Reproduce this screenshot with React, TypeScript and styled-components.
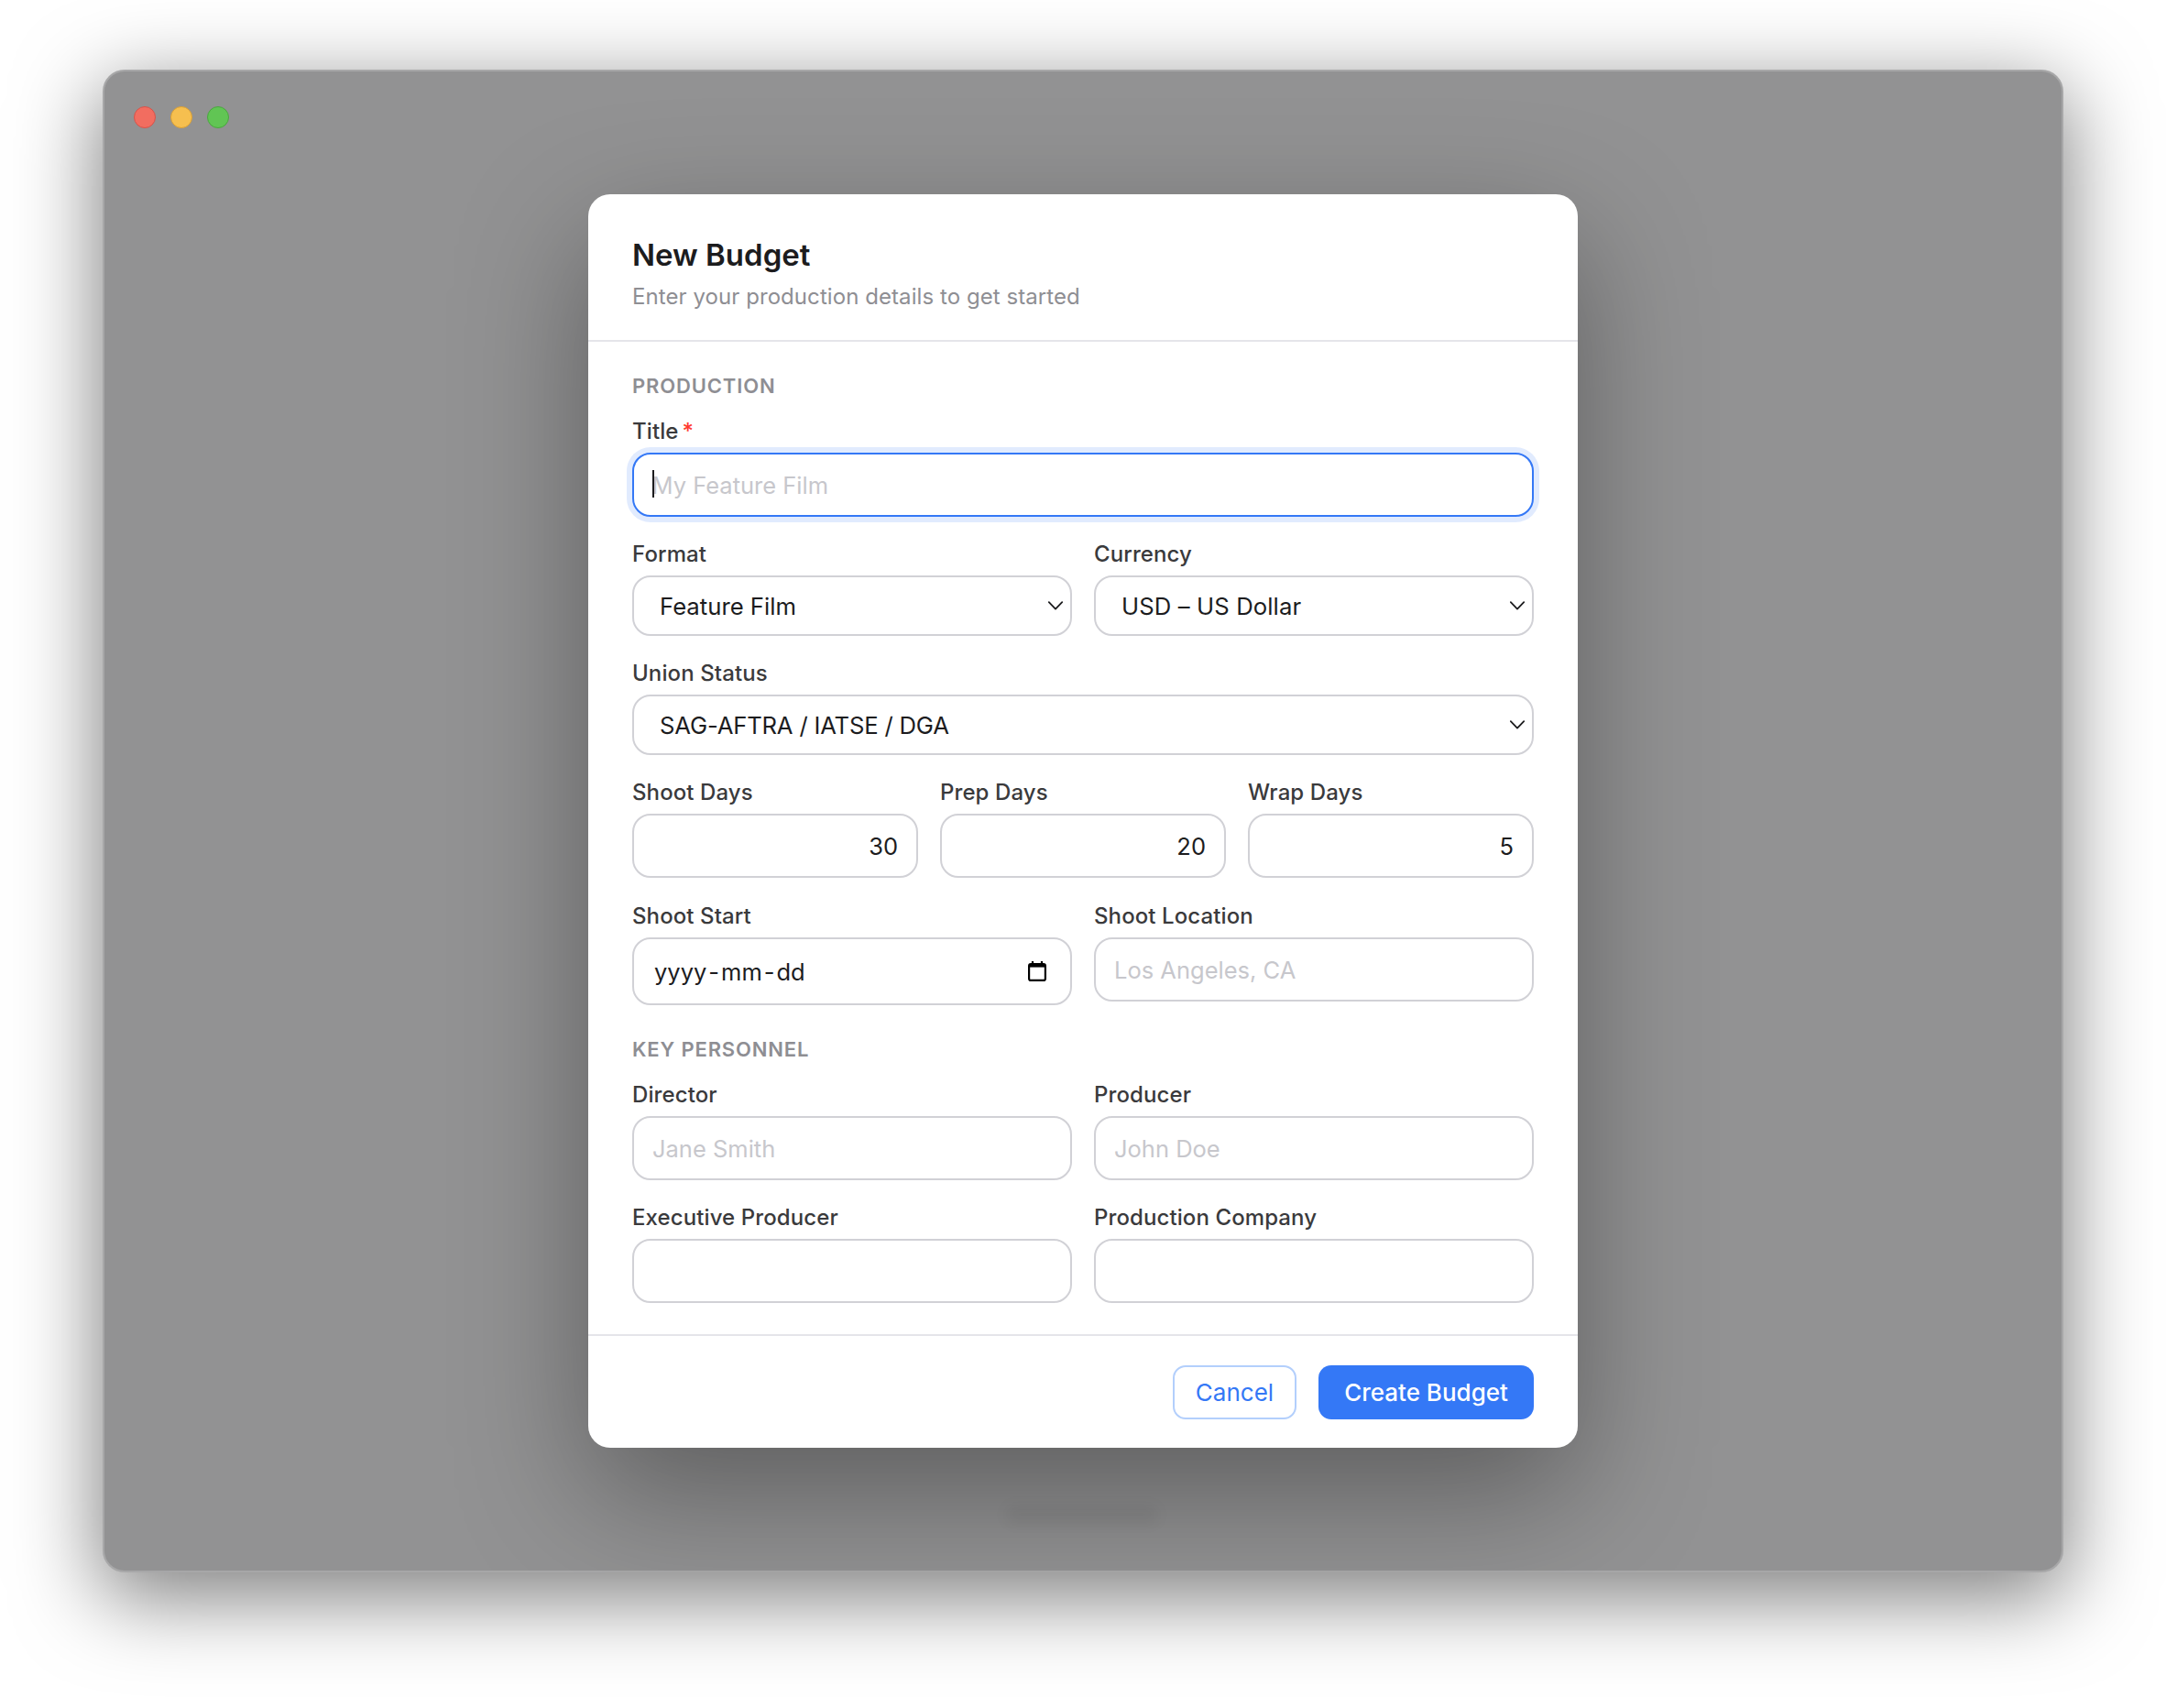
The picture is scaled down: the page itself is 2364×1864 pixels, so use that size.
import React from "react";
import styled, { createGlobalStyle } from "styled-components";

const GlobalStyle = createGlobalStyle`
  html, body {
    margin: 0;
    padding: 0;
    background: #fff;
  }
  * {
    box-sizing: border-box;
  }
`;

type Option = { label: string };

const ChevronIcon = () => (
  <Chevron viewBox="0 0 16 10" fill="none">
    <path d="M.8 1.2 8 8.6l7.2-7.4" stroke="#1c1c1e" strokeWidth="1.8" strokeLinecap="round" strokeLinejoin="round" />
  </Chevron>
);

const SelectField: React.FC<{ label: string; options: Option[]; tracking?: number }> = ({
  label,
  options,
  tracking = 0,
}) => (
  <Field>
    <Label>{label}</Label>
    <SelectWrap>
      <Select defaultValue={options[0].label} $tracking={tracking}>
        {options.map((o) => (
          <option key={o.label}>{o.label}</option>
        ))}
      </Select>
      <ChevronIcon />
    </SelectWrap>
  </Field>
);

const TextField: React.FC<{ label: string; placeholder?: string }> = ({ label, placeholder }) => (
  <Field>
    <Label>{label}</Label>
    <Input type="text" placeholder={placeholder} />
  </Field>
);

const NumberField: React.FC<{ label: string; value: number }> = ({ label, value }) => (
  <Field>
    <Label>{label}</Label>
    <NumberInput type="text" defaultValue={value} />
  </Field>
);

export default function App() {
  return (
    <>
      <GlobalStyle />
      <Page>
        <Window>
          <ModalShadow />
          <TrafficLights>
            <Light $fill="#f26d60" $edge="#d6534a" />
            <Light $fill="#f6bf4f" $edge="#d99f35" />
            <Light $fill="#61c554" $edge="#4aa63f" />
          </TrafficLights>
          <GhostText />
          <Modal>
            <Header>
              <Title>New Budget</Title>
              <Subtitle>Enter your production details to get started</Subtitle>
            </Header>
            <Body>
              <SectionLabel>Production</SectionLabel>
              <Field>
                <Label>
                  Title<Required>*</Required>
                </Label>
                <TitleInputWrap>
                  <Caret />
                  <FocusedInput type="text" placeholder="My Feature Film" />
                </TitleInputWrap>
              </Field>
              <TwoCol>
                <SelectField label="Format" options={[{ label: "Feature Film" }]} />
                <SelectField label="Currency" options={[{ label: "USD – US Dollar" }]} tracking={0.1} />
              </TwoCol>
              <SelectField label="Union Status" options={[{ label: "SAG-AFTRA / IATSE / DGA" }]} tracking={-0.2} />
              <ThreeCol>
                <NumberField label="Shoot Days" value={30} />
                <NumberField label="Prep Days" value={20} />
                <NumberField label="Wrap Days" value={5} />
              </ThreeCol>
              <TwoCol>
                <Field>
                  <Label>Shoot Start</Label>
                  <DateBox>
                    <DateText>
                      yyyy<DateDash>-</DateDash>mm<DateDash>-</DateDash>dd
                    </DateText>
                    <svg width="20" height="22" viewBox="0 0 20 22" fill="none">
                      <path d="M5 0v4M15 0v4" stroke="#000" strokeWidth="2.2" />
                      <rect x="1.1" y="3.1" width="17.8" height="17.8" rx="2" stroke="#000" strokeWidth="2.2" />
                      <path d="M1 5.3h18" stroke="#000" strokeWidth="2.6" />
                    </svg>
                  </DateBox>
                </Field>
                <TextField label="Shoot Location" placeholder="Los Angeles, CA" />
              </TwoCol>
              <SectionLabel $spaced>Key Personnel</SectionLabel>
              <TwoCol>
                <TextField label="Director" placeholder="Jane Smith" />
                <TextField label="Producer" placeholder="John Doe" />
              </TwoCol>
              <TwoCol>
                <TextField label="Executive Producer" />
                <TextField label="Production Company" />
              </TwoCol>
            </Body>
            <Footer>
              <SecondaryButton>Cancel</SecondaryButton>
              <PrimaryButton>Create Budget</PrimaryButton>
            </Footer>
          </Modal>
        </Window>
      </Page>
    </>
  );
}

const Page = styled.div`
  width: 2364px;
  height: 1864px;
  padding: 76px 112px 148px;
  background: #fff;
  overflow: hidden;
  font-family: Inter, "Liberation Sans", sans-serif;
`;

const Window = styled.div`
  position: relative;
  width: 2140px;
  height: 1640px;
  border-radius: 24px;
  background: #929293;
  box-shadow: 0 24px 90px 4px rgba(0, 0, 0, 0.5);
  display: flex;
  align-items: center;
  justify-content: center;

  &::after {
    content: "";
    position: absolute;
    inset: 0;
    border-radius: 24px;
    box-shadow: inset 0 0 0 2px rgba(255, 255, 255, 0.2);
    pointer-events: none;
  }
`;

/* the modal shadow stays inside the window, the window's own shadow does not */
const ModalShadow = styled.div`
  position: absolute;
  inset: 0;
  border-radius: 24px;
  overflow: hidden;

  &::before {
    content: "";
    position: absolute;
    left: 530px;
    top: 136px;
    width: 1080px;
    height: 1368px;
    border-radius: 24px;
    box-shadow: 0 50px 140px rgba(0, 0, 0, 0.36);
  }
`;

const TrafficLights = styled.div`
  position: absolute;
  left: 34px;
  top: 40px;
  display: flex;
  gap: 16px;
`;

const Light = styled.span<{ $fill: string; $edge: string }>`
  width: 24px;
  height: 24px;
  border-radius: 50%;
  background: ${(p) => p.$fill};
  border: 1px solid ${(p) => p.$edge};
`;

const GhostText = styled.div`
  position: absolute;
  left: 986px;
  top: 1568px;
  width: 166px;
  height: 18px;
  border-radius: 9px;
  background: rgba(0, 0, 0, 0.05);
  filter: blur(7px);
`;

const Modal = styled.div`
  position: relative;
  width: 1080px;
  height: 1368px;
  background: #fff;
  border-radius: 24px;
  display: flex;
  flex-direction: column;
`;

const Header = styled.div`
  padding: 46px 48px 0;
  height: 161px;
  border-bottom: 2px solid #e5e5ea;
`;

const Title = styled.h2`
  margin: 0;
  font-size: 33px;
  line-height: 40px;
  font-weight: 600;
  color: #1c1c1e;
`;

const Subtitle = styled.p`
  margin: 10px 0 0;
  font-size: 24px;
  line-height: 32px;
  letter-spacing: 0.07px;
  color: #8e8e93;
`;

const Body = styled.div`
  flex: 1;
  padding: 34px 48px 0;
  display: flex;
  flex-direction: column;
  gap: 24px;
`;

const SectionLabel = styled.div<{ $spaced?: boolean }>`
  font-size: 22px;
  line-height: 28px;
  font-weight: 600;
  letter-spacing: 0.85px;
  text-transform: uppercase;
  color: #8e8e93;
  margin-top: ${(p) => (p.$spaced ? "10px" : "0")};
  margin-bottom: -5px;
`;

const Field = styled.div`
  display: flex;
  flex-direction: column;
  min-width: 0;
`;

const Label = styled.label`
  font-size: 24px;
  line-height: 33px;
  font-weight: 500;
  letter-spacing: 0.1px;
  color: #3a3a3c;
  margin-bottom: 7px;
`;

const Required = styled.span`
  color: #ff3b30;
  margin-left: 4px;
`;

const TwoCol = styled.div`
  display: grid;
  grid-template-columns: 1fr 1fr;
  gap: 24px;
`;

const ThreeCol = styled.div`
  display: grid;
  grid-template-columns: 1fr 1fr 1fr;
  gap: 24px;
  margin-bottom: 1px;
`;

const Input = styled.input`
  width: 100%;
  height: 70px;
  padding: 0 20px;
  border: 2px solid #d1d1d6;
  border-radius: 20px;
  background: #fff;
  outline: none;
  font-family: inherit;
  font-size: 25.5px;
  color: #1c1c1e;

  &::placeholder {
    color: #c7c7cc;
    opacity: 1;
  }
`;

const NumberInput = styled(Input)`
  text-align: right;
`;

const TitleInputWrap = styled.div`
  position: relative;
`;

const FocusedInput = styled(Input)`
  padding: 0 19.5px;
  border: 2.5px solid #3478f6;
  box-shadow: 0 0 0 6px rgba(52, 120, 246, 0.15);
`;

const Caret = styled.span`
  position: absolute;
  left: 22px;
  top: 19px;
  width: 2px;
  height: 30px;
  background: #1c1c1e;
`;

const SelectWrap = styled.div`
  position: relative;
`;

const Select = styled.select<{ $tracking: number }>`
  width: 100%;
  height: 66px;
  padding: 0 44px 0 28px;
  appearance: none;
  border: 2px solid #d1d1d6;
  border-radius: 20px;
  background: #fff;
  outline: none;
  font-family: inherit;
  font-size: 25.7px;
  letter-spacing: ${(p) => p.$tracking}px;
  color: #1c1c1e;
`;

const Chevron = styled.svg`
  position: absolute;
  right: 10px;
  top: 28px;
  width: 16px;
  height: 10px;
  pointer-events: none;
`;

const DateBox = styled.div`
  height: 74px;
  padding: 0 26px 0 22px;
  display: flex;
  align-items: center;
  justify-content: space-between;
  border: 2px solid #d1d1d6;
  border-radius: 20px;
  background: #fff;
`;

const DateText = styled.span`
  font-size: 25.5px;
  color: #1c1c1e;
`;

const DateDash = styled.span`
  margin: 0 2px;
`;

const Footer = styled.div`
  height: 124px;
  padding: 32px 48px;
  border-top: 2px solid #e5e5ea;
  display: flex;
  justify-content: flex-end;
  gap: 24px;
`;

const BaseButton = styled.button`
  height: 59px;
  border-radius: 14px;
  font-family: inherit;
  font-size: 26px;
  font-weight: 400;
`;

const SecondaryButton = styled(BaseButton)`
  width: 135px;
  background: #fff;
  color: #3478f6;
  border: 2px solid #b3cffc;
`;

const PrimaryButton = styled(BaseButton)`
  width: 235px;
  background: #3478f6;
  color: #fff;
  border: none;
  font-weight: 500;
`;
